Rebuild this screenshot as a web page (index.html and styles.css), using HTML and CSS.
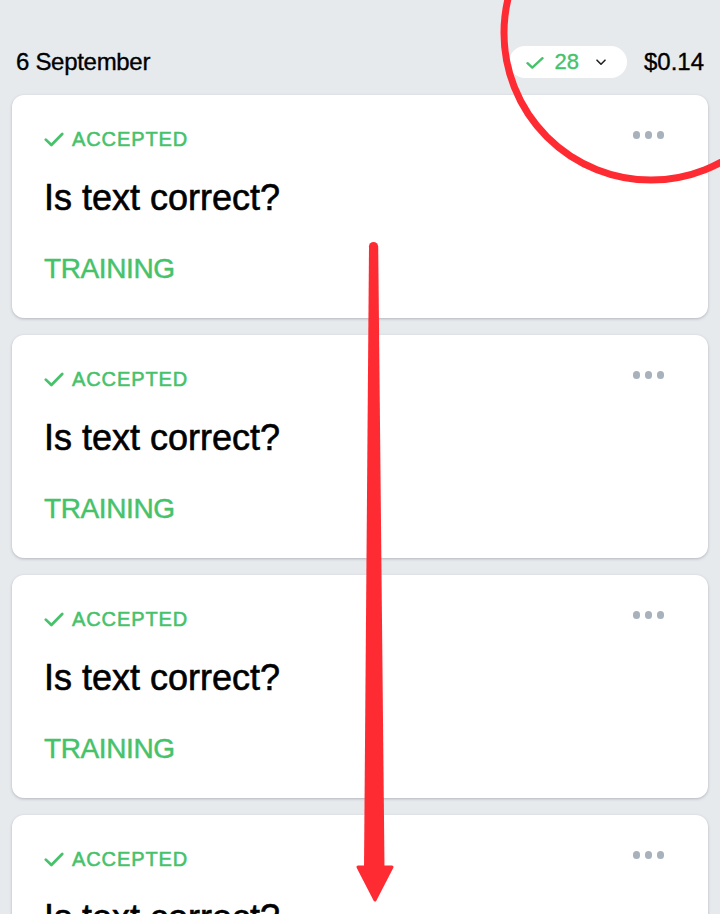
FILE: index.html
```html
<!DOCTYPE html>
<html lang="en">
<head>
<meta charset="utf-8">
<title>Tasks</title>
<link rel="stylesheet" href="styles.css">
</head>
<body>
<div class="page">
  <header class="day-head">
    <div class="day-date">6 September</div>
    <div class="day-right">
      <button class="count-pill" type="button">
        <svg class="pill-check" width="18" height="12" viewBox="0 0 18 12"><path d="M1.5 6.2 L6.3 10.6 L16.5 1.2" fill="none" stroke="#45c26a" stroke-width="2.4" stroke-linecap="round" stroke-linejoin="round"/></svg>
        <span class="pill-num">28</span>
        <svg class="pill-chev" width="10" height="7" viewBox="0 0 10 7"><path d="M1 1.2 L5 5.2 L9 1.2" fill="none" stroke="#222" stroke-width="1.6" stroke-linecap="round" stroke-linejoin="round"/></svg>
      </button>
      <div class="day-sum">$0.14</div>
    </div>
  </header>

  <div class="task-list">
    <article class="task-card">
      <div class="task-top">
        <div class="task-status">
          <svg class="status-check" width="20" height="15" viewBox="0 0 20 15"><path d="M1.8 7.6 L7.4 13 L18.2 2" fill="none" stroke="#45c26a" stroke-width="2.7" stroke-linecap="round" stroke-linejoin="round"/></svg>
          <span>ACCEPTED</span>
        </div>
        <div class="task-more"><i></i><i></i><i></i></div>
      </div>
      <h2 class="task-title">Is text correct?</h2>
      <div class="task-tag">TRAINING</div>
    </article>

    <article class="task-card">
      <div class="task-top">
        <div class="task-status">
          <svg class="status-check" width="20" height="15" viewBox="0 0 20 15"><path d="M1.8 7.6 L7.4 13 L18.2 2" fill="none" stroke="#45c26a" stroke-width="2.7" stroke-linecap="round" stroke-linejoin="round"/></svg>
          <span>ACCEPTED</span>
        </div>
        <div class="task-more"><i></i><i></i><i></i></div>
      </div>
      <h2 class="task-title">Is text correct?</h2>
      <div class="task-tag">TRAINING</div>
    </article>

    <article class="task-card">
      <div class="task-top">
        <div class="task-status">
          <svg class="status-check" width="20" height="15" viewBox="0 0 20 15"><path d="M1.8 7.6 L7.4 13 L18.2 2" fill="none" stroke="#45c26a" stroke-width="2.7" stroke-linecap="round" stroke-linejoin="round"/></svg>
          <span>ACCEPTED</span>
        </div>
        <div class="task-more"><i></i><i></i><i></i></div>
      </div>
      <h2 class="task-title">Is text correct?</h2>
      <div class="task-tag">TRAINING</div>
    </article>

    <article class="task-card">
      <div class="task-top">
        <div class="task-status">
          <svg class="status-check" width="20" height="15" viewBox="0 0 20 15"><path d="M1.8 7.6 L7.4 13 L18.2 2" fill="none" stroke="#45c26a" stroke-width="2.7" stroke-linecap="round" stroke-linejoin="round"/></svg>
          <span>ACCEPTED</span>
        </div>
        <div class="task-more"><i></i><i></i><i></i></div>
      </div>
      <h2 class="task-title">Is text correct?</h2>
      <div class="task-tag">TRAINING</div>
    </article>
  </div>
</div>

<svg class="annotation" width="720" height="914" viewBox="0 0 720 914">
  <circle cx="651" cy="33" r="147" fill="none" stroke="#ff2b33" stroke-width="7"/>
  <circle cx="373.5" cy="246.5" r="4.6" fill="#ff2b33"/>
  <polygon points="369,246.5 378.2,246.5 384.5,868 364,868" fill="#ff2b33"/>
  <polygon points="358,867 392,867 375,900" fill="#ff2b33" stroke="#ff2b33" stroke-width="3" stroke-linejoin="round"/>
</svg>
</body>
</html>
```

FILE: styles.css
```css
html, body {
  margin: 0;
  padding: 0;
  overflow: hidden;
}
body {
  background: #e7eaed;
  font-family: "Liberation Sans", Arial, sans-serif;
  color: #000;
}
.page {
  width: 720px;
  padding: 46px 0 0;
  box-sizing: border-box;
}
.day-head {
  display: flex;
  align-items: center;
  justify-content: space-between;
  height: 32px;
  padding: 0 16px;
}
.day-date {
  font-size: 24px;
  line-height: 32px;
  letter-spacing: -0.3px;
  -webkit-text-stroke: 0.35px #000;
}
.day-right {
  display: flex;
  align-items: center;
  gap: 17px;
}
.count-pill {
  display: flex;
  align-items: center;
  height: 32px;
  padding: 0 21px 0 17px;
  border: 0;
  border-radius: 16px;
  background: #fff;
  font-family: inherit;
  cursor: pointer;
}
.pill-check {
  display: block;
  margin-top: 1px;
}
.pill-num {
  margin-left: 10px;
  font-size: 22px;
  line-height: 32px;
  color: #45c26a;
  -webkit-text-stroke: 0.35px #45c26a;
}
.pill-chev {
  display: block;
  margin-left: 17px;
}
.day-sum {
  font-size: 24px;
  line-height: 32px;
  -webkit-text-stroke: 0.35px #000;
}
.task-list {
  display: flex;
  flex-direction: column;
  gap: 17px;
  padding: 17px 12px 0;
}
.task-card {
  background: #fff;
  border-radius: 12px;
  box-shadow: 0 1px 3px rgba(40, 50, 60, 0.28);
  padding: 32px 44px 33px 32px;
  height: 223px;
  box-sizing: border-box;
  display: flex;
  flex-direction: column;
}
.task-top {
  display: flex;
  justify-content: space-between;
  align-items: flex-start;
}
.task-status {
  display: flex;
  align-items: center;
  gap: 8px;
  height: 24px;
  font-size: 20px;
  letter-spacing: 0.9px;
  color: #45c26a;
  -webkit-text-stroke: 0.55px #45c26a;
}
.status-check {
  display: block;
}
.task-more {
  display: flex;
  gap: 4.5px;
  margin-top: 4px;
}
.task-more i {
  display: block;
  width: 7.5px;
  height: 7.5px;
  border-radius: 50%;
  background: #a7b2bc;
}
.task-title {
  margin: 25px 0 0;
  font-size: 36px;
  line-height: 44px;
  font-weight: normal;
  letter-spacing: 0;
  -webkit-text-stroke: 0.6px #000;
}
.task-tag {
  margin-top: 33px;
  font-size: 28px;
  line-height: 32px;
  letter-spacing: -0.4px;
  color: #45c26a;
  -webkit-text-stroke: 0.45px #45c26a;
}
.annotation {
  position: fixed;
  left: 0;
  top: 0;
  pointer-events: none;
}
```
